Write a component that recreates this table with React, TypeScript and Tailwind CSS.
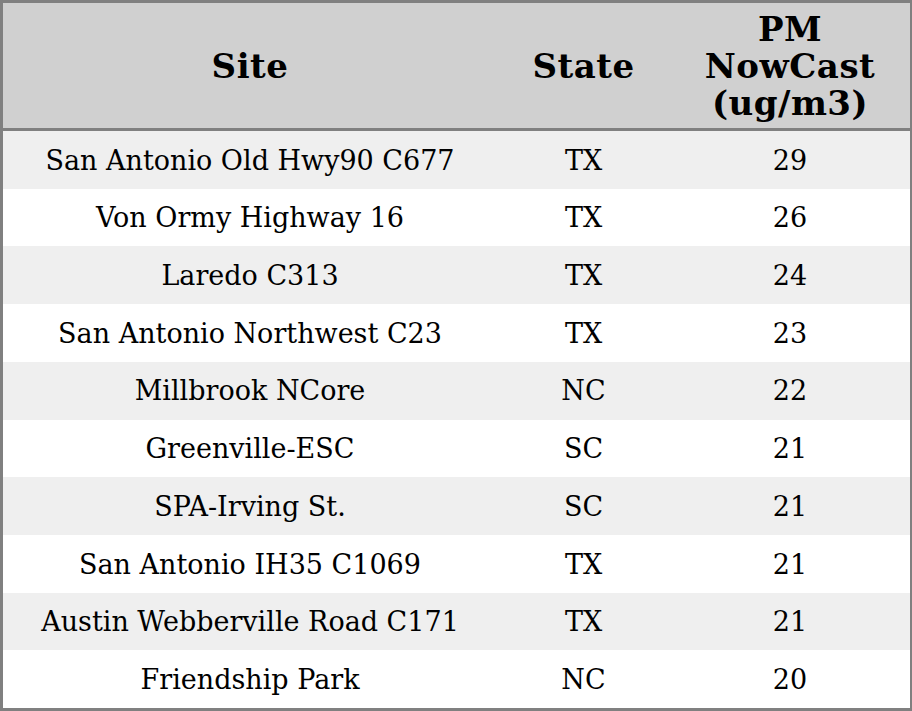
import React from "react";

const rows: [string, string, string][] = [
  ["San Antonio Old Hwy90 C677", "TX", "29"],
  ["Von Ormy Highway 16", "TX", "26"],
  ["Laredo C313", "TX", "24"],
  ["San Antonio Northwest C23", "TX", "23"],
  ["Millbrook NCore", "NC", "22"],
  ["Greenville-ESC", "SC", "21"],
  ["SPA-Irving St.", "SC", "21"],
  ["San Antonio IH35 C1069", "TX", "21"],
  ["Austin Webberville Road C171", "TX", "21"],
  ["Friendship Park", "NC", "20"],
];

export default function App() {
  return (
    <div className="w-[912px] h-[711px] overflow-hidden bg-white">
      <div
        className="w-[913px] h-[711px] border-[3px] border-[#808080] flex flex-col text-black"
        style={{ fontFamily: '"DejaVu Serif", serif' }}
      >
        <div className="flex h-[125px] shrink-0 bg-[#d0d0d0] border-b-[3px] border-[#808080] box-content items-center font-bold text-[34px] leading-[37px] tracking-[0.5px] text-center">
          <div className="w-[494px] pt-[2px]">Site</div>
          <div className="w-[173px] pt-[2px]">State</div>
          <div className="flex-1 pt-[2px]">
            PM
            <br />
            NowCast
            <br />
            (ug/m3)
          </div>
        </div>
        <div className="flex-1 flex flex-col">
          {rows.map((r, i) => (
            <div
              key={i}
              className={`flex-1 flex items-center text-[27px] text-center ${i % 2 === 0 ? "bg-[#efefef]" : "bg-white"}`}
            >
              <div className="w-[494px] pt-[2px]">{r[0]}</div>
              <div className="w-[173px] pt-[2px]">{r[1]}</div>
              <div className="flex-1 pt-[2px]">{r[2]}</div>
            </div>
          ))}
        </div>
      </div>
    </div>
  );
}
